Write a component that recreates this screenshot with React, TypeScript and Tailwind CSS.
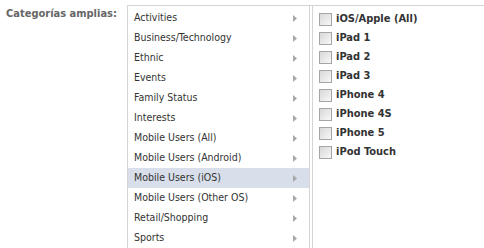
const categories = [
  'Activities',
  'Business/Technology',
  'Ethnic',
  'Events',
  'Family Status',
  'Interests',
  'Mobile Users (All)',
  'Mobile Users (Android)',
  'Mobile Users (iOS)',
  'Mobile Users (Other OS)',
  'Retail/Shopping',
  'Sports',
];

const devices = ['iOS/Apple (All)', 'iPad 1', 'iPad 2', 'iPad 3', 'iPhone 4', 'iPhone 4S', 'iPhone 5', 'iPod Touch'];

function Arrow() {
  return (
    <svg width="4" height="7" viewBox="0 0 4 7" className="shrink-0">
      <path d="M0 0 L4 3.5 L0 7 Z" fill="#a8a8a8" />
    </svg>
  );
}

export default function App() {
  return (
    <div className="w-[484px] h-[248px] overflow-hidden bg-white flex font-['DejaVu_Sans_Condensed','DejaVu_Sans',sans-serif] text-[10px]">
      <div className="w-[127px] shrink-0 pl-[6px] pt-[6px]">
        <span className="font-bold text-[#666] text-[11px] whitespace-nowrap">Categorías amplias:</span>
      </div>
      <div className="flex-1 mt-[5px] border-t border-l border-[#d4d4d4] flex">
        <ul className="w-[182px] shrink-0 border-r border-[#d4d4d4] pt-[2px]">
          {categories.map((c) => (
            <li
              key={c}
              className={`h-[20px] flex items-center justify-between pl-[6px] pr-[12px] text-[#333] text-[10.5px] ${c === 'Mobile Users (iOS)' ? 'bg-[#d8dfea]' : ''}`}
            >
              <span className="whitespace-nowrap">{c}</span>
              <Arrow />
            </li>
          ))}
        </ul>
        <div className="flex-1 ml-[2px] border-l border-[#d4d4d4] pl-[6px] pt-[4px]">
          {devices.map((d) => (
            <label key={d} className="h-[19px] flex items-center gap-[4px] text-[#333] font-bold text-[11px]">
              <span className="w-[13px] h-[13px] border border-[#a5a5a5] bg-gradient-to-br from-[#d8d8d8] to-[#f8f8f8] shrink-0" />
              <span className="whitespace-nowrap">{d}</span>
            </label>
          ))}
        </div>
      </div>
    </div>
  );
}
